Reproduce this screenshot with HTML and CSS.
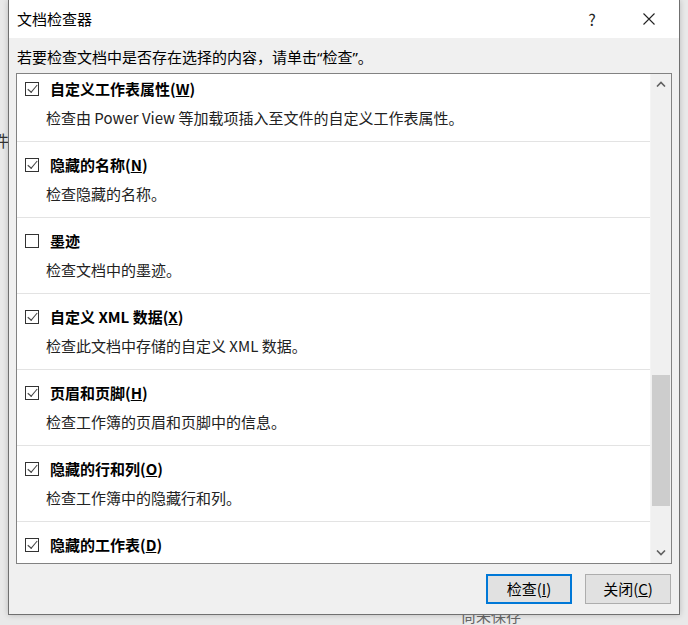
FILE: index.html
```html
<!DOCTYPE html>
<html lang="zh-CN">
  <head>
    <meta charset="UTF-8" />
    <title>文档检查器</title>
    <link rel="stylesheet" href="styles.css">
  </head>

  <body>
    <div class="backdrop">
      <span class="behind-left">件</span>
      <span class="behind-bottom">尚未保存</span>
    </div>

    <div class="dialog">
      <div class="titlebar">
        <span class="title">文档检查器</span>
        <span class="help">?</span>
        <span class="close">
          <svg width="12" height="12" viewBox="0 0 12 12">
            <path d="M0.5 0.5 L11.5 11.5 M11.5 0.5 L0.5 11.5" stroke="#222" stroke-width="1.1" fill="none" />
          </svg>
        </span>
      </div>

      <p class="intro">若要检查文档中是否存在选择的内容，请单击<span class="q">“</span>检查<span class="q">”</span>。</p>

      <div class="listbox">
        <div class="items">
          <div class="item first">
            <div class="item-title"><span class="check on"></span>自定义工作表属性(<u>W</u>)</div>
            <div class="item-desc">检查由 Power View 等加载项插入至文件的自定义工作表属性。</div>
          </div>
          <div class="item">
            <div class="item-title"><span class="check on"></span>隐藏的名称(<u>N</u>)</div>
            <div class="item-desc">检查隐藏的名称。</div>
          </div>
          <div class="item">
            <div class="item-title"><span class="check"></span>墨迹</div>
            <div class="item-desc">检查文档中的墨迹。</div>
          </div>
          <div class="item">
            <div class="item-title"><span class="check on"></span>自定义 XML 数据(<u>X</u>)</div>
            <div class="item-desc">检查此文档中存储的自定义 XML 数据。</div>
          </div>
          <div class="item">
            <div class="item-title"><span class="check on"></span>页眉和页脚(<u>H</u>)</div>
            <div class="item-desc">检查工作簿的页眉和页脚中的信息。</div>
          </div>
          <div class="item">
            <div class="item-title"><span class="check on"></span>隐藏的行和列(<u>O</u>)</div>
            <div class="item-desc">检查工作簿中的隐藏行和列。</div>
          </div>
          <div class="item">
            <div class="item-title"><span class="check on"></span>隐藏的工作表(<u>D</u>)</div>
          </div>
        </div>

        <div class="scrollbar">
          <div class="arrow">
            <svg width="10" height="6" viewBox="0 0 10 6">
              <path d="M1 5.5 L5 1.5 L9 5.5" stroke="#606060" stroke-width="1.6" fill="none" />
            </svg>
          </div>
          <div class="track">
            <div class="thumb"></div>
          </div>
          <div class="arrow">
            <svg width="10" height="6" viewBox="0 0 10 6">
              <path d="M1 0.5 L5 4.5 L9 0.5" stroke="#606060" stroke-width="1.6" fill="none" />
            </svg>
          </div>
        </div>
      </div>

      <div class="buttons">
        <button class="btn default">检查(<u>I</u>)</button>
        <button class="btn">关闭(<u>C</u>)</button>
      </div>
    </div>
  </body>
</html>
```

FILE: styles.css
```css
html,
body {
  margin: 0;
  height: 100%;
  overflow: hidden;
}

body {
  font-family: "Noto Sans CJK SC", "Noto Sans", sans-serif;
  font-size: 15px;
  color: #000;
  background: #e9e9e9;
  padding: 0 8px;
  box-sizing: border-box;
}

.backdrop {
  color: #555;
}

.behind-left {
  position: absolute;
  left: -7px;
  top: 130px;
  font-size: 16px;
  line-height: 20px;
  color: #333;
}

.behind-bottom {
  position: absolute;
  left: 461px;
  top: 606px;
  font-size: 15px;
  line-height: 20px;
  color: #666;
}

.dialog {
  position: relative;
  width: 672px;
  height: 615px;
  box-sizing: border-box;
  background: #f0f0f0;
  border: 1px solid #707070;
  border-top: none;
  box-shadow: 0 0 6px rgba(0, 0, 0, 0.2);
  display: flex;
  flex-direction: column;
}

.titlebar {
  height: 38px;
  background: #fff;
  display: flex;
  align-items: center;
  padding-left: 8px;
}

.title {
  flex: 1;
  line-height: 20px;
}

.help {
  width: 24px;
  text-align: center;
  font-size: 16px;
  line-height: 20px;
  margin-right: 33px;
  color: #222;
}

.close {
  width: 24px;
  display: flex;
  justify-content: center;
  margin-right: 18px;
}

.intro {
  margin: 8px 0 0 8px;
  line-height: 22px;
  height: 26px;
}

.q {
  font-family: "Noto Sans", sans-serif;
}

.listbox {
  margin: 1px 0 0 7px;
  width: 656px;
  height: 491px;
  box-sizing: border-box;
  border: 1px solid #828282;
  background: #fff;
  display: flex;
  overflow: hidden;
}

.items {
  flex: 1;
  overflow: hidden;
}

.item {
  border-top: 1px solid #e3e3e3;
  padding: 13px 0 13px 0;
}

.item.first {
  border-top: none;
  padding-top: 5px;
}

.item-title {
  font-weight: bold;
  line-height: 20px;
  display: flex;
  align-items: center;
  padding-left: 8px;
}

.item-desc {
  margin-top: 9px;
  line-height: 20px;
  padding-left: 29px;
  color: #222;
}

.check {
  width: 14px;
  height: 14px;
  border: 1px solid #333;
  box-sizing: border-box;
  margin-right: 11px;
  background: #fff;
  position: relative;
}

.check.on::after {
  content: "";
  position: absolute;
  left: 2px;
  top: 0px;
  width: 8px;
  height: 4px;
  border-left: 1px solid #444;
  border-bottom: 1px solid #444;
  transform: translate(0px, 2px) rotate(-50deg) scaleX(1.1);
  transform-origin: center;
}

.scrollbar {
  width: 20px;
  background: #f0f0f0;
  border-left: 1px solid #f4f4f4;
  display: flex;
  flex-direction: column;
}

.arrow {
  height: 20px;
  display: flex;
  align-items: center;
  justify-content: center;
}

.track {
  flex: 1;
  padding-top: 281px;
}

.thumb {
  margin: 0 1px;
  height: 131px;
  background: #cdcdcd;
}

.buttons {
  display: flex;
  justify-content: flex-end;
  gap: 13px;
  padding: 10px 8px 0 0;
}

.btn {
  width: 86px;
  height: 30px;
  box-sizing: border-box;
  font-family: inherit;
  font-size: 15px;
  background: #e1e1e1;
  border: 1px solid #adadad;
  color: #000;
  padding: 0;
  line-height: 20px;
}

.btn.default {
  border: 2px solid #0078d7;
}
```
